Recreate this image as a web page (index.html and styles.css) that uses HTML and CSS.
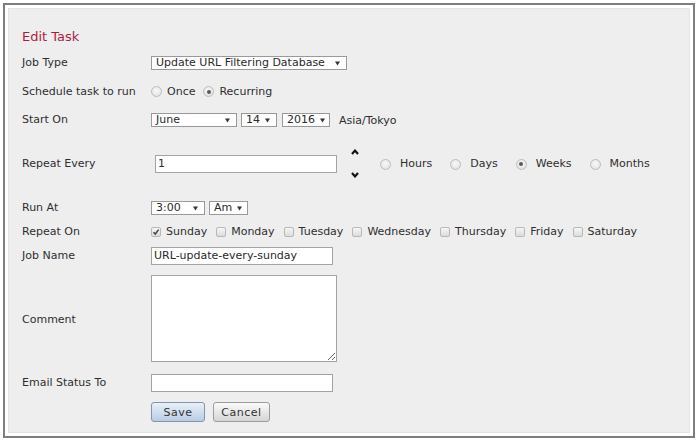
FILE: index.html
```html
<!DOCTYPE html>
<html>
<head>
<meta charset="utf-8">
<link rel="stylesheet" href="styles.css">
</head>
<body>
<div class="frame">
  <div class="panel">
    <div class="title">Edit Task</div>

    <div class="row r-job">
      <div class="label">Job Type</div>
      <div class="ctl">
        <div class="sel w-job"><span>Update URL Filtering Database</span><svg class="arr" width="5" height="5" viewBox="0 0 5 5"><polygon points="0,0.5 5,0.5 2.5,4.5" fill="#333"/></svg></div>
      </div>
    </div>

    <div class="row r-sched">
      <div class="label">Schedule task to run</div>
      <div class="ctl">
        <label class="opt small"><span class="radio"></span>Once</label>
        <label class="opt small"><span class="radio on"></span>Recurring</label>
      </div>
    </div>

    <div class="row r-start">
      <div class="label">Start On</div>
      <div class="ctl">
        <div class="sel w-june"><span>June</span><svg class="arr" width="5" height="5" viewBox="0 0 5 5"><polygon points="0,0.5 5,0.5 2.5,4.5" fill="#333"/></svg></div>
        <div class="sel w-day"><span>14</span><svg class="arr" width="5" height="5" viewBox="0 0 5 5"><polygon points="0,0.5 5,0.5 2.5,4.5" fill="#333"/></svg></div>
        <div class="sel w-year"><span>2016</span><svg class="arr" width="5" height="5" viewBox="0 0 5 5"><polygon points="0,0.5 5,0.5 2.5,4.5" fill="#333"/></svg></div>
        <span class="tz">Asia/Tokyo</span>
      </div>
    </div>

    <div class="row r-repeat">
      <div class="label">Repeat Every</div>
      <div class="ctl">
        <div class="txt w-num">1</div>
        <div class="spin">
          <svg width="8" height="6" viewBox="0 0 8 6"><path d="M1 5 L4 1.6 L7 5" fill="none" stroke="#111" stroke-width="2.2"/></svg>
          <svg width="8" height="6" viewBox="0 0 8 6"><path d="M1 1 L4 4.4 L7 1" fill="none" stroke="#111" stroke-width="2.2"/></svg>
        </div>
        <div class="units">
          <label class="opt wide"><span class="radio"></span>Hours</label>
          <label class="opt wide"><span class="radio"></span>Days</label>
          <label class="opt wide"><span class="radio on"></span>Weeks</label>
          <label class="opt wide"><span class="radio"></span>Months</label>
        </div>
      </div>
    </div>

    <div class="row r-runat">
      <div class="label">Run At</div>
      <div class="ctl">
        <div class="sel w-time"><span>3:00</span><svg class="arr" width="5" height="5" viewBox="0 0 5 5"><polygon points="0,0.5 5,0.5 2.5,4.5" fill="#333"/></svg></div>
        <div class="sel w-ampm"><span>Am</span><svg class="arr" width="5" height="5" viewBox="0 0 5 5"><polygon points="0,0.5 5,0.5 2.5,4.5" fill="#333"/></svg></div>
      </div>
    </div>

    <div class="row r-days">
      <div class="label">Repeat On</div>
      <div class="ctl">
        <label class="opt chk"><span class="box on"><svg width="8" height="8" viewBox="0 0 8 8"><path d="M1.5 4.2 L3.3 6 L6.6 1.6" fill="none" stroke="#444" stroke-width="1.5"/></svg></span>Sunday</label>
        <label class="opt chk"><span class="box"></span>Monday</label>
        <label class="opt chk"><span class="box"></span>Tuesday</label>
        <label class="opt chk"><span class="box"></span>Wednesday</label>
        <label class="opt chk"><span class="box"></span>Thursday</label>
        <label class="opt chk"><span class="box"></span>Friday</label>
        <label class="opt chk"><span class="box"></span>Saturday</label>
      </div>
    </div>

    <div class="row r-name">
      <div class="label">Job Name</div>
      <div class="ctl">
        <div class="txt w-field">URL-update-every-sunday</div>
      </div>
    </div>

    <div class="row r-comment">
      <div class="label lab-comment">Comment</div>
      <div class="ctl">
        <textarea class="area"></textarea>
      </div>
    </div>

    <div class="row r-email">
      <div class="label">Email Status To</div>
      <div class="ctl">
        <div class="txt w-field"></div>
      </div>
    </div>

    <div class="row r-btn">
      <div class="label"></div>
      <div class="ctl">
        <button class="btn save">Save</button>
        <button class="btn cancel">Cancel</button>
      </div>
    </div>
  </div>
</div>
</body>
</html>
```

FILE: styles.css
```css
html, body {
  margin: 0;
  padding: 0;
  background: #ffffff;
}
body {
  font-family: "DejaVu Sans", Verdana, sans-serif;
  font-size: 11px;
  color: #2e2e2e;
}
.frame {
  box-sizing: border-box;
  margin: 3px 0 0 3px;
  width: 692px;
  height: 435px;
  border: 2px solid #7e7e7e;
  padding: 3px;
}
.panel {
  box-sizing: border-box;
  height: 100%;
  background: #eeeeee;
  border: 1px solid #e3e3e3;
  padding: 21px 0 0 13px;
}
.title {
  height: 14px;
  line-height: 14px;
  font-size: 13px;
  color: #b21a3f;
  margin-bottom: 5px;
}
.row {
  display: grid;
  grid-template-columns: 129px 1fr;
  align-items: center;
}
.label {
  line-height: 14px;
  white-space: nowrap;
}
.ctl {
  display: flex;
  align-items: center;
}
.r-job { height: 28px; }
.r-sched { height: 29px; }
.r-start { height: 28px; }
.r-repeat { height: 60px; }
.r-runat { height: 28px; }
.r-days { height: 19px; }
.r-name { height: 30px; }
.r-comment { height: 94px; }
.r-email { height: 36px; }
.r-btn { height: 22px; }
.lab-comment { padding-top: 4px; }

.sel {
  box-sizing: border-box;
  height: 14px;
  background: #ffffff;
  border: 1px solid #9a9a9a;
  display: flex;
  align-items: center;
  justify-content: space-between;
  padding: 0 6px 0 4px;
  line-height: 12px;
  white-space: nowrap;
  color: #2a2a2a;
}
.sel + .sel { margin-left: 4px; }
.arr { flex: none; margin-left: 5px; }
.w-job { width: 196px; }
.w-june { width: 86px; }
.w-day { width: 36px; margin-left: 4px; }
.w-year { width: 48px; margin-left: 5px !important; }
.w-time { width: 54px; }
.w-ampm { width: 39px; }
.tz { margin-left: 9px; }

.opt {
  display: inline-flex;
  align-items: center;
  white-space: nowrap;
  line-height: 14px;
}
.radio {
  box-sizing: border-box;
  width: 11px;
  height: 11px;
  border-radius: 50%;
  border: 1px solid #bdbdbd;
  background: radial-gradient(circle at 50% 40%, #f8f8f8 0%, #e6e6e6 70%, #d8d8d8 100%);
  display: inline-flex;
  align-items: center;
  justify-content: center;
  flex: none;
}
.radio.on::after {
  content: "";
  width: 4px;
  height: 4px;
  border-radius: 50%;
  background: #5a5a5a;
}
.small .radio { margin-right: 5px; }
.small { margin-right: 8px; }
.wide .radio { margin-right: 9px; }
.wide { margin-right: 18px; }

.box {
  box-sizing: border-box;
  width: 10px;
  height: 10px;
  border: 1px solid #b8b8b8;
  border-radius: 2px;
  background: linear-gradient(#f6f6f6, #dcdcdc);
  margin-right: 5px;
  display: inline-flex;
  align-items: center;
  justify-content: center;
  flex: none;
}
.chk { margin-right: 9px; }

.txt {
  box-sizing: border-box;
  height: 18px;
  background: #ffffff;
  border: 1px solid #a3a3a3;
  padding: 0 2px;
  line-height: 16px;
  color: #2a2a2a;
  white-space: nowrap;
}
.w-num { width: 182px; margin-left: 4px; }
.w-field { width: 182px; }
.spin {
  display: flex;
  flex-direction: column;
  justify-content: space-between;
  height: 29px;
  margin-left: 14px;
  margin-top: -1px;
}
.spin svg { display: block; }
.units {
  display: flex;
  align-items: center;
  margin-left: 21px;
}
.area {
  box-sizing: border-box;
  width: 186px;
  height: 87px;
  margin: 0;
  border: 1px solid #a3a3a3;
  background: #ffffff;
  font-family: inherit;
  font-size: 11px;
  padding: 2px;
}
.btn {
  box-sizing: border-box;
  height: 20px;
  font-family: inherit;
  font-size: 11px;
  color: #333;
  border-radius: 3px;
  padding: 0;
  margin: 0;
  letter-spacing: 0.5px;
}
.save {
  width: 54px;
  border: 1px solid #8294b0;
  background: linear-gradient(#e9f0f9, #b9cce4);
}
.cancel {
  width: 57px;
  margin-left: 8px;
  border: 1px solid #9c9c9c;
  background: linear-gradient(#fafafa, #d5d5d5);
}
```
